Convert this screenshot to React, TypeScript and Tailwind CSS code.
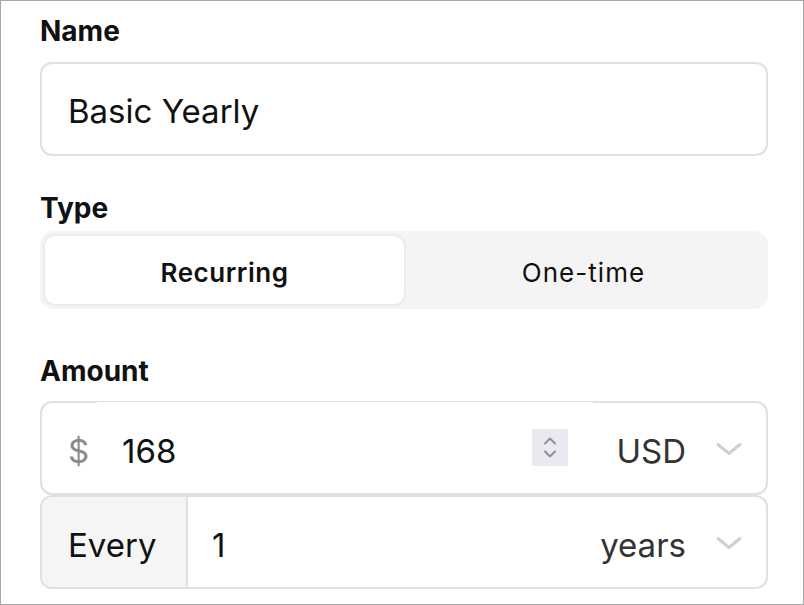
import React from 'react';

function ChevronDown() {
  return (
    <svg width="26" height="14" viewBox="0 0 26 14" fill="none" stroke="#cfcfcf" strokeWidth="3" strokeLinecap="round" strokeLinejoin="round">
      <path d="M2 2.5l11 9 11-9" />
    </svg>
  );
}

function Spinner() {
  return (
    <div className="w-[36px] h-[37px] bg-[#e9e9ef] flex flex-col items-center justify-center gap-[5px]">
      <svg width="14" height="8" viewBox="0 0 14 8" fill="none" stroke="#8f8fa0" strokeWidth="2" strokeLinecap="round" strokeLinejoin="round">
        <path d="M2 6.5l5-5 5 5" />
      </svg>
      <svg width="14" height="8" viewBox="0 0 14 8" fill="none" stroke="#8f8fa0" strokeWidth="2" strokeLinecap="round" strokeLinejoin="round">
        <path d="M2 1.5l5 5 5-5" />
      </svg>
    </div>
  );
}

export default function App() {
  return (
    <div
      className="w-[804px] h-[605px] bg-white border border-[#a8a8a8] pl-[39px] pr-[35px] text-[#111]"
      style={{ fontFamily: 'Inter, "Noto Sans", sans-serif' }}
    >
      {/* Name */}
      <div className="mt-[16px] h-[28px] leading-[28px] text-[28px] font-bold">Name</div>
      <div className="mt-[17px] h-[94px] border-2 border-[#e0e0e0] rounded-[12px] flex items-center pl-[26px] pt-[5px] text-[33px]">
        Basic Yearly
      </div>

      {/* Type */}
      <div className="mt-[38px] h-[28px] leading-[28px] text-[28px] font-bold">Type</div>
      <div className="mt-[9px] h-[78px] rounded-[14px] bg-[#f4f4f4] p-[5px] grid grid-cols-2">
        <div className="bg-white rounded-[10px] shadow-[0_0_0_2px_#ececec,0_1px_3px_rgba(0,0,0,0.06)] flex items-center justify-center pt-[4px] text-[26px] tracking-[0.02em] font-semibold">
          Recurring
        </div>
        <div className="flex items-center justify-center pt-[4px] text-[26px] tracking-[0.04em]">One-time</div>
      </div>

      {/* Amount */}
      <div className="mt-[48px] h-[28px] leading-[28px] text-[28px] font-bold">Amount</div>
      <div className="mt-[16px] h-[94px] border-2 border-[#e0e0e0] rounded-[12px] flex items-stretch text-[33px]">
        <div className="w-[55px] pl-[26px] pt-[8px] flex items-center text-[#8a8a8a]">$</div>
        <div className="relative -mt-px flex-1 bg-white flex items-center justify-between pl-[25px] pr-[25px]">
          <span className="pt-[9px]">168</span>
          <Spinner />
        </div>
        <div className="w-[173px] flex items-center justify-end gap-[30px] pr-[24px] pt-[2px] text-[#333]">
          <span className="pt-[6px]">USD</span>
          <ChevronDown />
        </div>
      </div>
      <div className="h-[94px] border-2 border-[#e0e0e0] rounded-[12px] overflow-hidden flex items-stretch text-[33px]">
        <div className="w-[146px] bg-[#f5f5f5] border-r-2 border-[#e0e0e0] pl-[26px] pt-[8px] flex items-center">Every</div>
        <div className="relative -mt-px w-[365px] bg-white flex items-center pl-[24px] pt-[9px]">1</div>
        <div className="flex-1 flex items-center justify-end gap-[30px] pr-[24px] pt-[2px] text-[#333]">
          <span className="pt-[6px]">years</span>
          <ChevronDown />
        </div>
      </div>
    </div>
  );
}
